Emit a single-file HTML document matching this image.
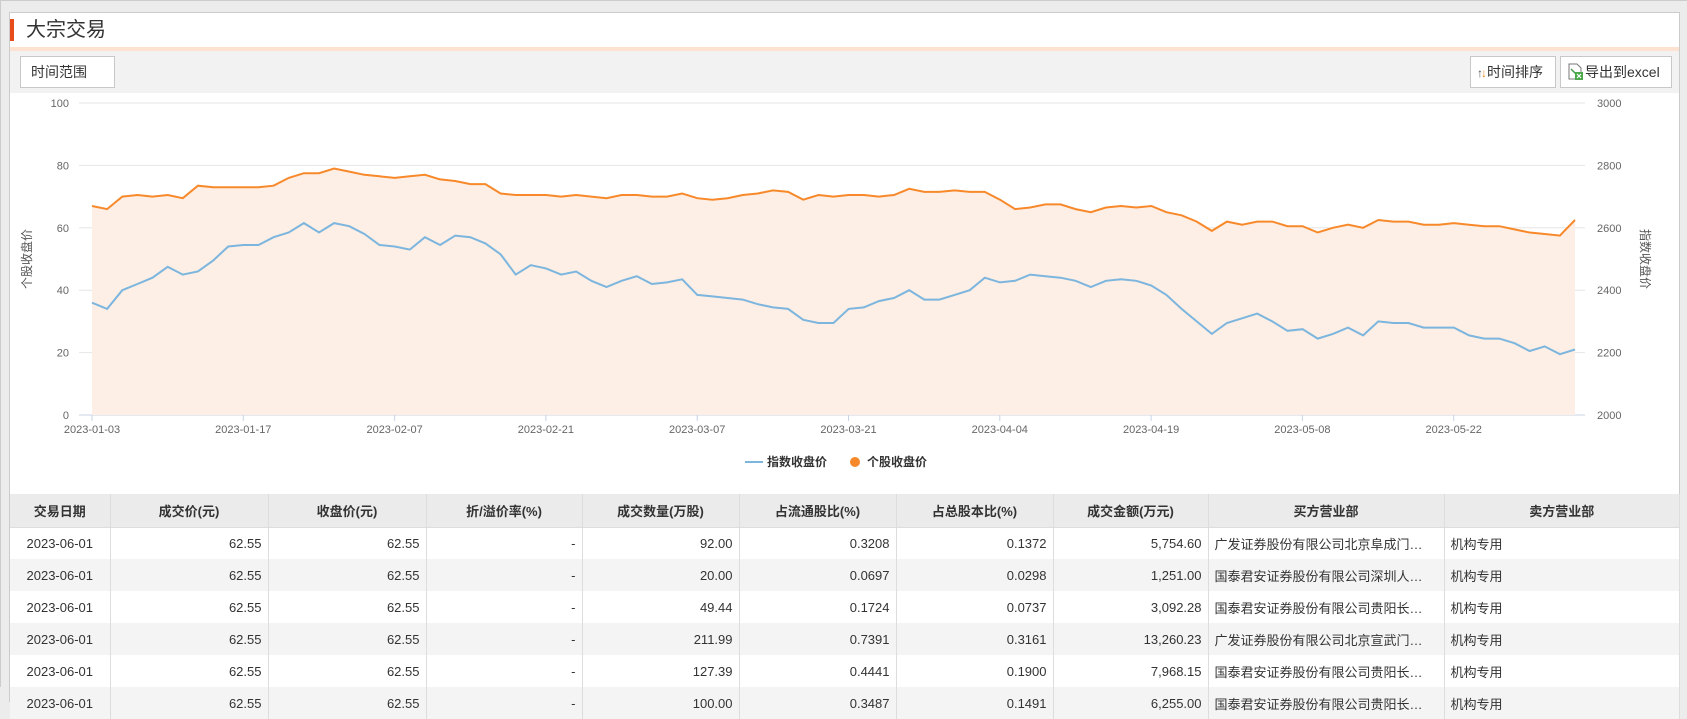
<!DOCTYPE html>
<html><head><meta charset="utf-8"><style>
*{box-sizing:border-box;margin:0;padding:0}
body{width:1687px;height:687px;overflow:hidden;background:#ececec;font-family:"Liberation Sans","Noto Sans CJK SC",sans-serif;color:#333;position:relative;border-top:1px solid #ccc;border-left:1px solid #ccc}
#panel{position:absolute;left:8px;top:11px;width:1671px;height:690px;background:#fff;border:1px solid #ccc}
.ttl{position:absolute;left:0;top:6px;height:22px;border-left:4px solid #e84c1b;padding-left:12px;font-size:20px;line-height:22px;color:#333}
.peach{position:absolute;left:0;right:0;top:34px;height:4px;background:#fde2d2}
.tool{position:absolute;left:0;right:0;top:38px;height:42px;background:#f2f2f2}
.btn{position:absolute;top:5px;height:32px;border:1px solid #c8c8c8;background:#fff;font-size:14px;line-height:30px;color:#333}
table{position:absolute;left:0;top:493px;width:1670px;border-collapse:collapse;font-size:13px}
th{background:#ebebeb;height:33px;font-weight:bold;border-right:1px solid #ddd;border-bottom:1px solid #ddd;color:#333}
td{height:32px;border-right:1px solid #ddd;padding:0 6px;white-space:nowrap;overflow:hidden;color:#333}
tr.g td{background:#f4f4f4}
.r{text-align:right}
.c{text-align:center}
svg text{font-family:"Liberation Sans","Noto Sans CJK SC",sans-serif}
</style></head><body>
<div id="panel">
<div class="ttl">大宗交易</div>
<div class="peach"></div>
<div class="tool">
 <div class="btn" style="left:10px;width:95px;padding-left:10px">时间范围</div>
 <div class="btn" style="left:1460px;width:86px;padding-left:6px"><span style="color:#555;font-size:12px">↑</span><span style="color:#f08a1c;font-size:12px;margin-left:-2px">↓</span>时间排序</div>
 <div class="btn" style="left:1550px;width:112px;padding-left:6px"><svg width="18" height="18" viewBox="0 0 18 18" style="vertical-align:-4px"><path d="M2 1h8l4 4v11H2z" fill="#fff" stroke="#777"/><path d="M4 6l5 5" stroke="#4a9d4a" stroke-width="1.5"/><rect x="8" y="9" width="8" height="8" fill="#4aa84a"/><path d="M10 11l4 4M14 11l-4 4" stroke="#fff" stroke-width="1.2"/></svg>导出到excel</div>
</div>
</div>
<svg id="ch" width="1687" height="480" style="position:absolute;left:0;top:0">
<g id="grid"></g>
<path id="area" fill="#fdefe5"/>
<polyline id="bl" fill="none" stroke="#7cb5de" stroke-width="2"/>
<polyline id="ol" fill="none" stroke="#f7892b" stroke-width="2"/>
<g font-size="11" fill="#666" id="lab"></g>
<text x="30" y="258" font-size="12" fill="#555" transform="rotate(-90 30 258)" text-anchor="middle">个股收盘价</text>
<text x="1640" y="258" font-size="12" fill="#555" transform="rotate(90 1640 258)" text-anchor="middle">指数收盘价</text>
<line x1="744" y1="461" x2="762" y2="461" stroke="#7cb5de" stroke-width="2"/>
<text x="766" y="465" font-size="12" fill="#333" font-weight="bold">指数收盘价</text>
<circle cx="854" cy="461" r="5" fill="#f7892b"/>
<text x="866" y="465" font-size="12" fill="#333" font-weight="bold">个股收盘价</text>
</svg>
<table style="left:9px">
<colgroup><col style="width:100px"><col style="width:158px"><col style="width:158px"><col style="width:156px"><col style="width:157px"><col style="width:157px"><col style="width:157px"><col style="width:155px"><col style="width:236px"><col></colgroup>
<tr><th>交易日期</th><th>成交价(元)</th><th>收盘价(元)</th><th>折/溢价率(%)</th><th>成交数量(万股)</th><th>占流通股比(%)</th><th>占总股本比(%)</th><th>成交金额(万元)</th><th>买方营业部</th><th>卖方营业部</th></tr>
<tr><td class="c">2023-06-01</td><td class="r">62.55</td><td class="r">62.55</td><td class="r">-</td><td class="r">92.00</td><td class="r">0.3208</td><td class="r">0.1372</td><td class="r">5,754.60</td><td>广发证券股份有限公司北京阜成门…</td><td>机构专用</td></tr>
<tr class="g"><td class="c">2023-06-01</td><td class="r">62.55</td><td class="r">62.55</td><td class="r">-</td><td class="r">20.00</td><td class="r">0.0697</td><td class="r">0.0298</td><td class="r">1,251.00</td><td>国泰君安证券股份有限公司深圳人…</td><td>机构专用</td></tr>
<tr><td class="c">2023-06-01</td><td class="r">62.55</td><td class="r">62.55</td><td class="r">-</td><td class="r">49.44</td><td class="r">0.1724</td><td class="r">0.0737</td><td class="r">3,092.28</td><td>国泰君安证券股份有限公司贵阳长…</td><td>机构专用</td></tr>
<tr class="g"><td class="c">2023-06-01</td><td class="r">62.55</td><td class="r">62.55</td><td class="r">-</td><td class="r">211.99</td><td class="r">0.7391</td><td class="r">0.3161</td><td class="r">13,260.23</td><td>广发证券股份有限公司北京宣武门…</td><td>机构专用</td></tr>
<tr><td class="c">2023-06-01</td><td class="r">62.55</td><td class="r">62.55</td><td class="r">-</td><td class="r">127.39</td><td class="r">0.4441</td><td class="r">0.1900</td><td class="r">7,968.15</td><td>国泰君安证券股份有限公司贵阳长…</td><td>机构专用</td></tr>
<tr class="g"><td class="c">2023-06-01</td><td class="r">62.55</td><td class="r">62.55</td><td class="r">-</td><td class="r">100.00</td><td class="r">0.3487</td><td class="r">0.1491</td><td class="r">6,255.00</td><td>国泰君安证券股份有限公司贵阳长…</td><td>机构专用</td></tr>
</table>
<script>
var O=[67,66,70,70.5,70,70.5,69.5,73.5,73,73,73,73,73.5,76,77.5,77.5,79,78,77,76.5,76,76.5,77,75.5,75,74,74,71,70.5,70.5,70.5,70,70.5,70,69.5,70.5,70.5,70,70,71,69.5,69,69.5,70.5,71,72,71.5,69,70.5,70,70.5,70.5,70,70.5,72.5,71.5,71.5,72,71.5,71.5,69,66,66.5,67.5,67.5,66,65,66.5,67,66.5,67,65,64,62,59,62,61,62,62,60.5,60.5,58.5,60,61,60,62.5,62,62,61,61,61.5,61,60.5,60.5,59.5,58.5,58,57.5,62.5];
var B=[36,34,40,42,44,47.5,45,46,49.5,54,54.5,54.5,57,58.5,61.5,58.5,61.5,60.5,58,54.5,54,53,57,54.5,57.5,57,55,51.5,45,48,47,45,46,43,41,43,44.5,42,42.5,43.5,38.5,38,37.5,37,35.5,34.5,34,30.5,29.5,29.5,34,34.5,36.5,37.5,40,37,37,38.5,40,44,42.5,43,45,44.5,44,43,41,43,43.5,43,41.5,38.5,34,30,26,29.5,31,32.5,30,27,27.5,24.5,26,28,25.5,30,29.5,29.5,28,28,28,25.5,24.5,24.5,23,20.5,22,19.5,21];
var x0=91,x1=1574,yb=414,k=3.12;
function pts(a){var n=a.length,s=[];for(var i=0;i<n;i++)s.push((x0+(x1-x0)*i/(n-1)).toFixed(1)+','+(yb-a[i]*k).toFixed(1));return s;}
var po=pts(O);document.getElementById('ol').setAttribute('points',po.join(' '));
document.getElementById('bl').setAttribute('points',pts(B).join(' '));
document.getElementById('area').setAttribute('d','M'+x0+','+yb+' L'+po.join(' L')+' L'+x1+','+yb+'Z');
var g='',l='';
for(var i=0;i<=5;i++){var y=yb-i*20*k;
 g+='<line x1="78" x2="1584" y1="'+y+'" y2="'+y+'" stroke="'+(i?'#e6e6e6':'#c8d3e6')+'"/>';
 l+='<text x="68" y="'+(y+4)+'" text-anchor="end">'+(i*20)+'</text><text x="1596" y="'+(y+4)+'">'+(2000+i*200)+'</text>';}
var d=['2023-01-03','2023-01-17','2023-02-07','2023-02-21','2023-03-07','2023-03-21','2023-04-04','2023-04-19','2023-05-08','2023-05-22'];
for(var j=0;j<d.length;j++){var x=x0+j*151.3;g+='<line x1="'+x+'" x2="'+x+'" y1="414" y2="420" stroke="#c8d3e6"/>';l+='<text x="'+x+'" y="432" text-anchor="middle">'+d[j]+'</text>';}
document.getElementById('grid').innerHTML=g;document.getElementById('lab').innerHTML=l;
</script>
</body></html>
